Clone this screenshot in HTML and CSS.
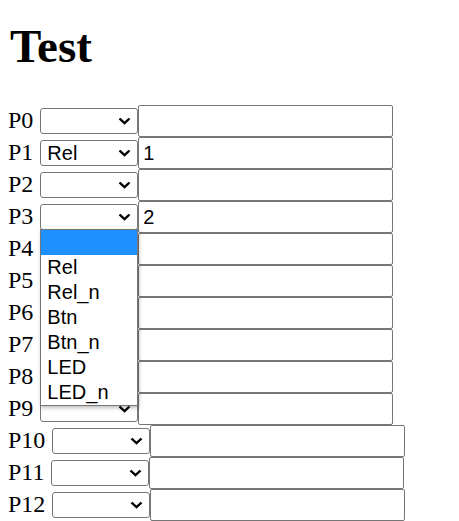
FILE: index.html
```html
<!DOCTYPE html>
<html>
<head>
<meta charset="utf-8">
<title>Test</title>
<link rel="stylesheet" href="styles.css">
</head>
<body>
<h1 class="title">Test</h1>
<div class="rows">
  <div class="row"><span class="lbl">P0</span><span class="sel"><span class="val">&nbsp;</span><svg class="chev" width="13" height="8" viewBox="0 0 13 8"><polyline points="1.5,1.5 6.5,6.2 11.5,1.5"/></svg></span><input class="field" type="text" value=""></div>
  <div class="row"><span class="lbl">P1</span><span class="sel"><span class="val">Rel</span><svg class="chev" width="13" height="8" viewBox="0 0 13 8"><polyline points="1.5,1.5 6.5,6.2 11.5,1.5"/></svg></span><input class="field" type="text" value="1"></div>
  <div class="row"><span class="lbl">P2</span><span class="sel"><span class="val">&nbsp;</span><svg class="chev" width="13" height="8" viewBox="0 0 13 8"><polyline points="1.5,1.5 6.5,6.2 11.5,1.5"/></svg></span><input class="field" type="text" value=""></div>
  <div class="row"><span class="lbl">P3</span><span class="sel"><span class="val">&nbsp;</span><svg class="chev" width="13" height="8" viewBox="0 0 13 8"><polyline points="1.5,1.5 6.5,6.2 11.5,1.5"/></svg><span class="popup"><span class="opt active">&nbsp;</span><span class="opt">Rel</span><span class="opt">Rel_n</span><span class="opt">Btn</span><span class="opt">Btn_n</span><span class="opt">LED</span><span class="opt">LED_n</span></span></span><input class="field" type="text" value="2"></div>
  <div class="row"><span class="lbl">P4</span><span class="sel"><span class="val">&nbsp;</span><svg class="chev" width="13" height="8" viewBox="0 0 13 8"><polyline points="1.5,1.5 6.5,6.2 11.5,1.5"/></svg></span><input class="field" type="text" value=""></div>
  <div class="row"><span class="lbl">P5</span><span class="sel"><span class="val">&nbsp;</span><svg class="chev" width="13" height="8" viewBox="0 0 13 8"><polyline points="1.5,1.5 6.5,6.2 11.5,1.5"/></svg></span><input class="field" type="text" value=""></div>
  <div class="row"><span class="lbl">P6</span><span class="sel"><span class="val">&nbsp;</span><svg class="chev" width="13" height="8" viewBox="0 0 13 8"><polyline points="1.5,1.5 6.5,6.2 11.5,1.5"/></svg></span><input class="field" type="text" value=""></div>
  <div class="row"><span class="lbl">P7</span><span class="sel"><span class="val">&nbsp;</span><svg class="chev" width="13" height="8" viewBox="0 0 13 8"><polyline points="1.5,1.5 6.5,6.2 11.5,1.5"/></svg></span><input class="field" type="text" value=""></div>
  <div class="row"><span class="lbl">P8</span><span class="sel"><span class="val">&nbsp;</span><svg class="chev" width="13" height="8" viewBox="0 0 13 8"><polyline points="1.5,1.5 6.5,6.2 11.5,1.5"/></svg></span><input class="field" type="text" value=""></div>
  <div class="row"><span class="lbl">P9</span><span class="sel"><span class="val">&nbsp;</span><svg class="chev" width="13" height="8" viewBox="0 0 13 8"><polyline points="1.5,1.5 6.5,6.2 11.5,1.5"/></svg></span><input class="field" type="text" value=""></div>
  <div class="row"><span class="lbl">P10</span><span class="sel"><span class="val">&nbsp;</span><svg class="chev" width="13" height="8" viewBox="0 0 13 8"><polyline points="1.5,1.5 6.5,6.2 11.5,1.5"/></svg></span><input class="field" type="text" value=""></div>
  <div class="row"><span class="lbl">P11</span><span class="sel"><span class="val">&nbsp;</span><svg class="chev" width="13" height="8" viewBox="0 0 13 8"><polyline points="1.5,1.5 6.5,6.2 11.5,1.5"/></svg></span><input class="field" type="text" value=""></div>
  <div class="row"><span class="lbl">P12</span><span class="sel"><span class="val">&nbsp;</span><svg class="chev" width="13" height="8" viewBox="0 0 13 8"><polyline points="1.5,1.5 6.5,6.2 11.5,1.5"/></svg></span><input class="field" type="text" value=""></div>
</div>
</body>
</html>
```
FILE: styles.css
```css
html, body {
  background: #fff;
}
body {
  margin: 8px;
  font-family: "Liberation Serif", "Times New Roman", serif;
  font-size: 24px;
  color: #000;
}
.title {
  font-family: "Liberation Serif", "Times New Roman", serif;
  font-size: 47px;
  font-weight: bold;
  margin: 11px 0 0;
  padding-left: 2px;
}
.rows {
  padding-top: 32px;
}
.row {
  display: flex;
  align-items: baseline;
  height: 32px;
}
.lbl {
  margin-right: 7px;
  white-space: nowrap;
}
.sel {
  position: relative;
  display: flex;
  align-items: center;
  box-sizing: border-box;
  width: 98px;
  height: 26px;
  border: 1px solid #767676;
  border-radius: 3px;
  background: #fff;
  padding-left: 6px;
  font-family: "Liberation Sans", Arial, sans-serif;
  font-size: 20px;
  line-height: 23px;
}
.val {
  flex: 1;
  white-space: nowrap;
}
.chev {
  margin-right: 6px;
  fill: none;
  stroke: #000;
  stroke-width: 2.4;
  stroke-linecap: butt;
}
.field {
  box-sizing: border-box;
  width: 255px;
  height: 32px;
  margin: 0;
  padding: 0 4px;
  border: 1px solid #767676;
  border-radius: 2px;
  background: #fff;
  font-family: "Liberation Sans", Arial, sans-serif;
  font-size: 20px;
  color: #000;
  outline: none;
}
.popup {
  position: absolute;
  left: -1px;
  top: 24px;
  width: 98px;
  box-sizing: border-box;
  display: flex;
  flex-direction: column;
  border: 1px solid #767676;
  background: #fff;
  box-shadow: 1px 2px 4px rgba(0, 0, 0, 0.25);
  z-index: 5;
}
.opt {
  display: block;
  height: 25px;
  line-height: 25px;
  padding-left: 6px;
  white-space: nowrap;
}
.opt.active {
  background: #1e90ff;
}
```
